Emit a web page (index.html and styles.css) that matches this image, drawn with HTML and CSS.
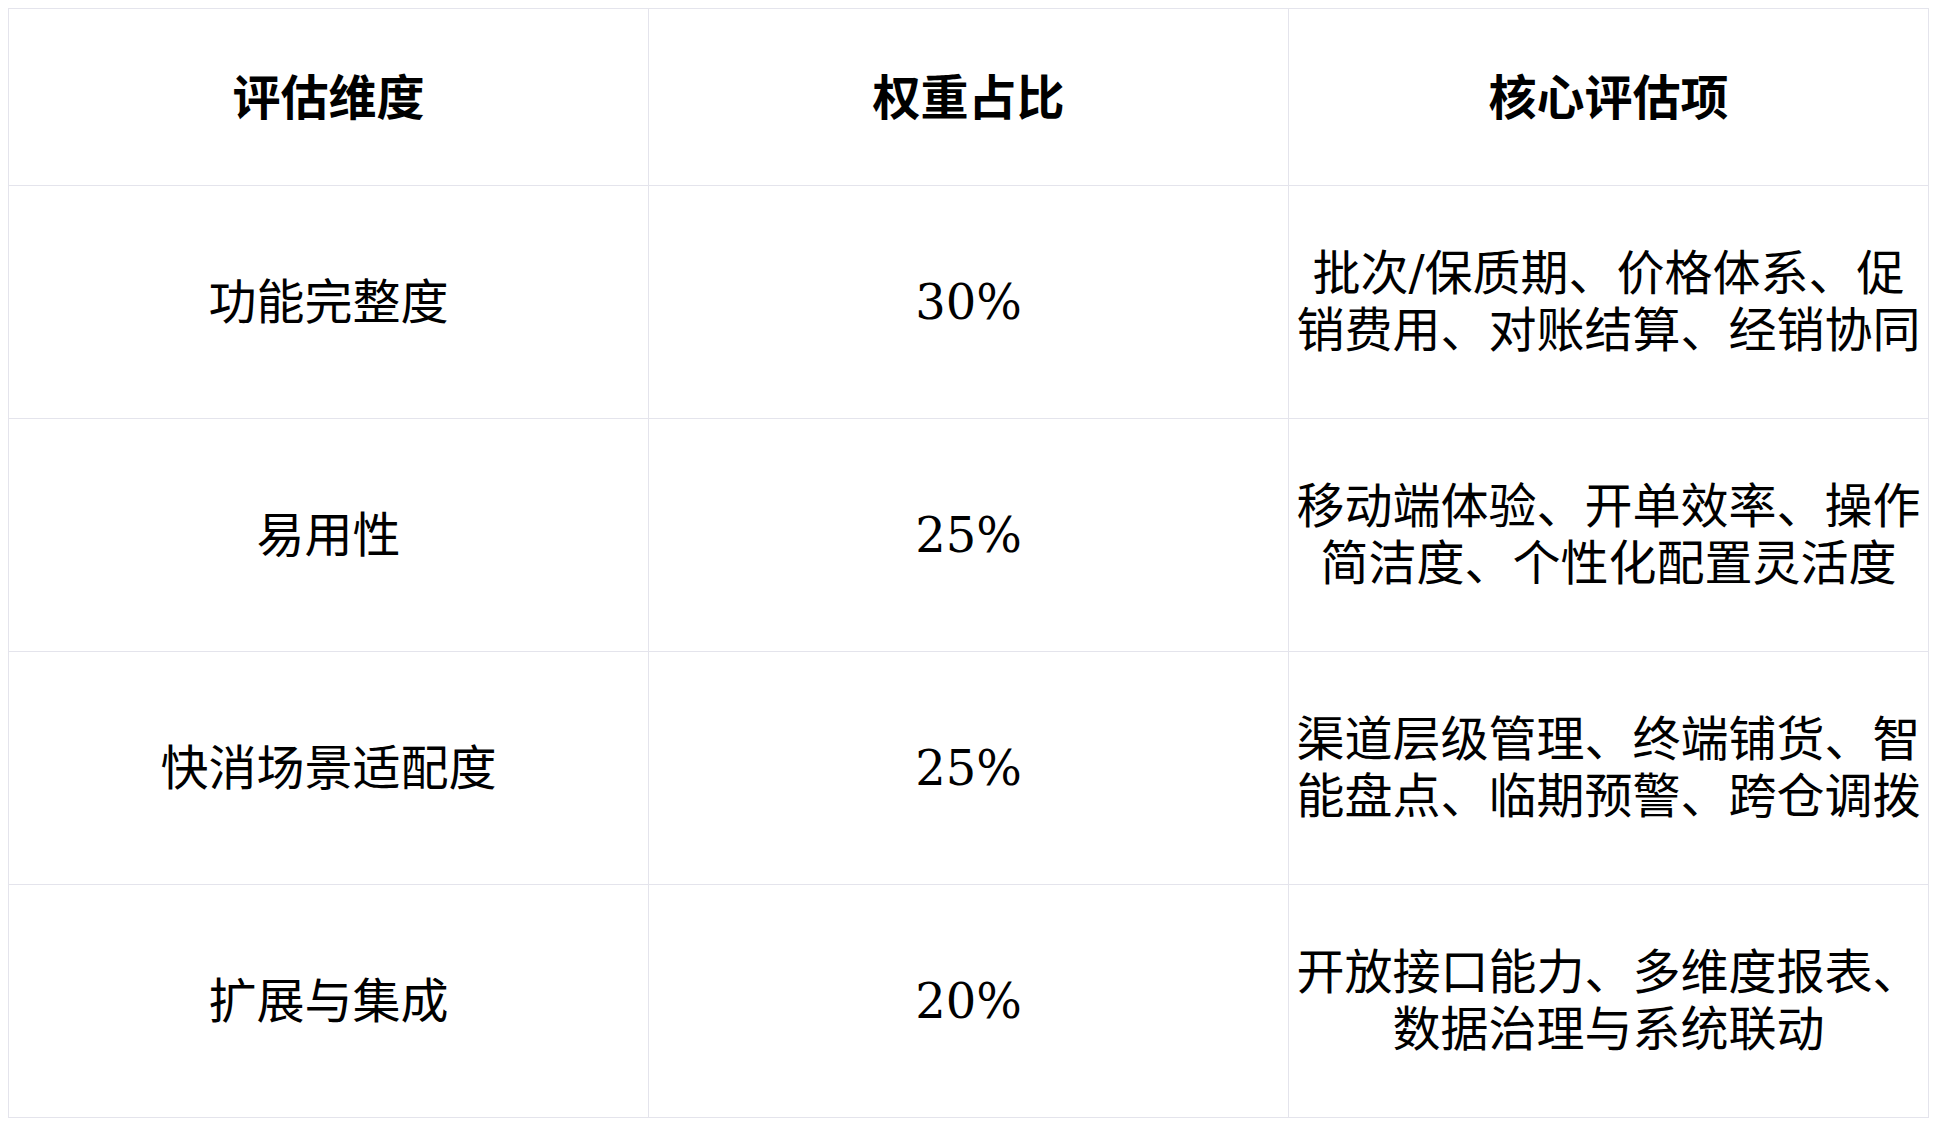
FILE: index.html
```html
<!DOCTYPE html>
<html lang="zh-CN">
<head>
<meta charset="utf-8">
<title>评估维度</title>
<link rel="stylesheet" href="styles.css">
</head>
<body>
<table class="eval-table">
  <thead>
    <tr>
      <th>评估维度</th>
      <th>权重占比</th>
      <th>核心评估项</th>
    </tr>
  </thead>
  <tbody>
    <tr>
      <td>功能完整度</td>
      <td class="pct">30%</td>
      <td>批次/保质期、价格体系、促销费用、对账结算、经销协同</td>
    </tr>
    <tr>
      <td>易用性</td>
      <td class="pct">25%</td>
      <td>移动端体验、开单效率、操作简洁度、个性化配置灵活度</td>
    </tr>
    <tr>
      <td>快消场景适配度</td>
      <td class="pct">25%</td>
      <td>渠道层级管理、终端铺货、智能盘点、临期预警、跨仓调拨</td>
    </tr>
    <tr>
      <td>扩展与集成</td>
      <td class="pct">20%</td>
      <td>开放接口能力、多维度报表、数据治理与系统联动</td>
    </tr>
  </tbody>
</table>
</body>
</html>
```

FILE: styles.css
```css
html, body {
  background: #ffffff;
}
body {
  margin: 8px;
  font-family: "DejaVu Serif", "Noto Sans CJK SC", serif;
  color: #000000;
}
.eval-table {
  width: 1921px;
  border-collapse: collapse;
  table-layout: fixed;
}
.eval-table th,
.eval-table td {
  border: 1px solid #e4e4ec;
  text-align: center;
  vertical-align: middle;
  font-size: 48px;
  line-height: 57px;
  padding: 0 2px;
}
.eval-table th {
  font-weight: bold;
  height: 170px;
  padding-bottom: 6px;
  font-family: "Noto Sans CJK SC", sans-serif;
}
.eval-table td {
  height: 232px;
  font-weight: normal;
}
```
